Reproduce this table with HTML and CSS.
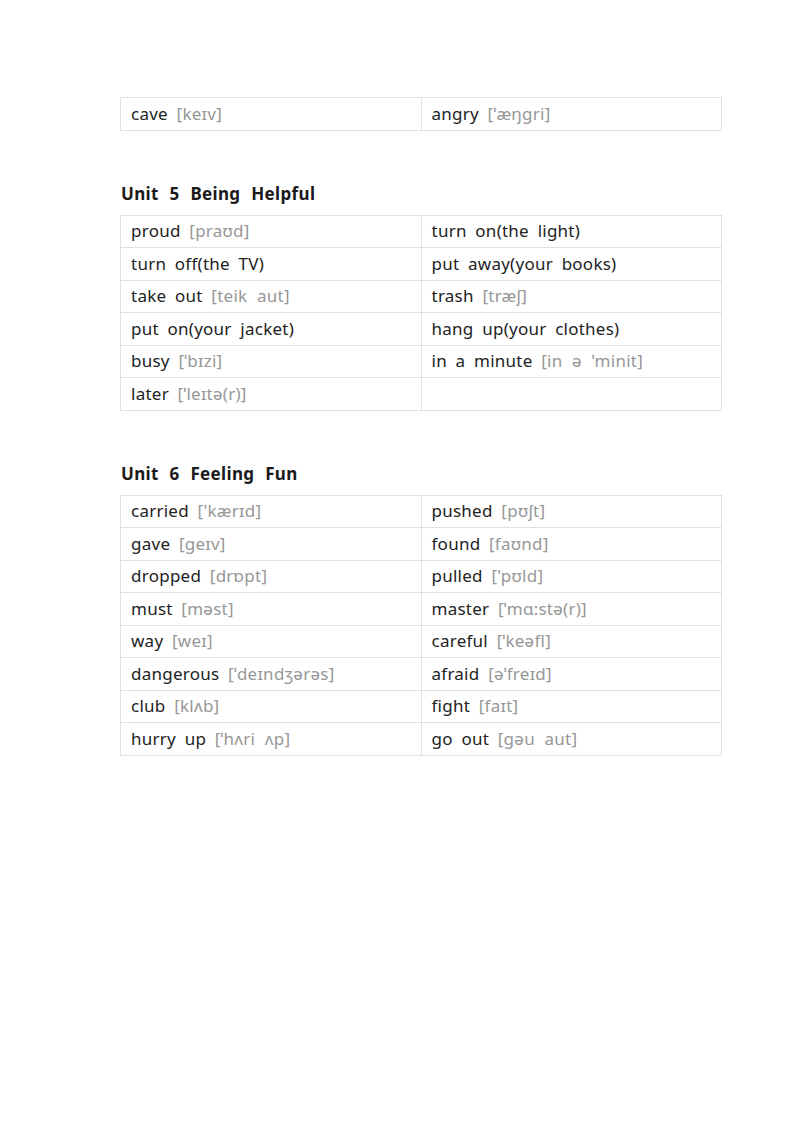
FILE: index.html
```html
<!DOCTYPE html>
<html>
<head>
<meta charset="utf-8">
<link rel="stylesheet" href="styles.css">
</head>
<body>
<div class="page">
  <table class="vocab first">
    <tr><td>cave <span class="ph">[keɪv]</span></td><td>angry <span class="ph">[ˈæŋgri]</span></td></tr>
  </table>

  <h2 class="unit">Unit 5 Being Helpful</h2>
  <table class="vocab">
    <tr><td>proud <span class="ph">[praʊd]</span></td><td>turn on(the light)</td></tr>
    <tr><td>turn off(the TV)</td><td>put away(your books)</td></tr>
    <tr><td>take out <span class="ph">[teik aut]</span></td><td>trash <span class="ph">[træʃ]</span></td></tr>
    <tr><td>put on(your jacket)</td><td>hang up(your clothes)</td></tr>
    <tr><td>busy <span class="ph">[ˈbɪzi]</span></td><td>in a minute <span class="ph">[in ə ˈminit]</span></td></tr>
    <tr><td>later <span class="ph">[ˈleɪtə(r)]</span></td><td></td></tr>
  </table>

  <h2 class="unit">Unit 6 Feeling Fun</h2>
  <table class="vocab">
    <tr><td>carried <span class="ph">['kærɪd]</span></td><td>pushed <span class="ph">[pʊʃt]</span></td></tr>
    <tr><td>gave <span class="ph">[geɪv]</span></td><td>found <span class="ph">[faʊnd]</span></td></tr>
    <tr><td>dropped <span class="ph">[drɒpt]</span></td><td>pulled <span class="ph">['pʊld]</span></td></tr>
    <tr><td>must <span class="ph">[məst]</span></td><td>master <span class="ph">[ˈmɑ:stə(r)]</span></td></tr>
    <tr><td>way <span class="ph">[weɪ]</span></td><td>careful <span class="ph">[ˈkeəfl]</span></td></tr>
    <tr><td>dangerous <span class="ph">[ˈdeɪndʒərəs]</span></td><td>afraid <span class="ph">[əˈfreɪd]</span></td></tr>
    <tr><td>club <span class="ph">[klʌb]</span></td><td>fight <span class="ph">[faɪt]</span></td></tr>
    <tr><td>hurry up <span class="ph">[ˈhʌri ʌp]</span></td><td>go out <span class="ph">[gəu aut]</span></td></tr>
  </table>
</div>
</body>
</html>
```

FILE: styles.css
```css
html, body {
  margin: 0;
  padding: 0;
  background: #ffffff;
}

.page {
  width: 602px;
  margin-left: 120px;
  padding-top: 97px;
  font-family: "Noto Sans", "Open Sans", sans-serif;
  color: #222222;
}

.vocab {
  width: 602px;
  border-collapse: collapse;
  table-layout: fixed;
  border: 1.5px solid #dedede;
}

.vocab td {
  width: 50%;
  height: 31.5px;
  padding: 0 0 0 10px;
  border: 1px solid #e0e0e0;
  font-size: 17px;
  line-height: 22px;
  letter-spacing: 0.25px;
  word-spacing: 4px;
  vertical-align: middle;
  white-space: nowrap;
}

.ph {
  color: #979797;
  word-spacing: 5px;
}

.unit {
  margin: 51px 0 9px 1px;
  font-size: 17px;
  font-weight: bold;
  line-height: 24px;
  letter-spacing: 0.35px;
  word-spacing: 6px;
  color: #1a1a1a;
}
```
